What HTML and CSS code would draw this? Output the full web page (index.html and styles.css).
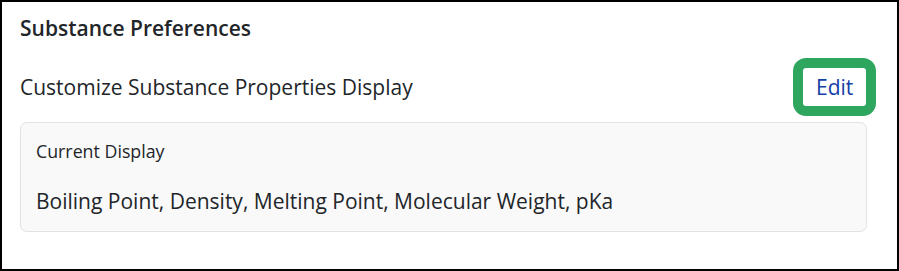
FILE: index.html
```html
<!DOCTYPE html>
<html lang="en">
<head>
<meta charset="utf-8">
<title>Substance Preferences</title>
<link rel="stylesheet" href="styles.css">
</head>
<body>
<section class="panel">
  <h2 class="panel-title">Substance Preferences</h2>
  <div class="setting-row">
    <span class="setting-label">Customize Substance Properties Display</span>
    <button class="edit-btn" type="button">Edit</button>
  </div>
  <div class="current-box">
    <div class="current-label">Current Display</div>
    <div class="current-value">Boiling Point, Density, Melting Point, Molecular Weight, pKa</div>
  </div>
</section>
</body>
</html>
```

FILE: styles.css
```css
html, body {
  margin: 0;
  padding: 0;
  background: #ffffff;
}

body {
  font-family: "Open Sans", "Noto Sans", "DejaVu Sans", sans-serif;
  color: #222529;
}

.panel {
  box-sizing: border-box;
  width: 899px;
  height: 271px;
  border: 2px solid #000000;
  padding: 12px 30px 0 18px;
  display: flex;
  flex-direction: column;
}

.panel-title {
  margin: 0;
  font-size: 21px;
  line-height: 28px;
  font-weight: 600;
  color: #222529;
}

.setting-row {
  margin-top: 26px;
  display: flex;
  align-items: center;
  justify-content: space-between;
}

.setting-label {
  font-size: 21px;
  line-height: 28px;
}

.edit-btn {
  box-sizing: border-box;
  font-family: inherit;
  font-size: 21px;
  line-height: 28px;
  color: #1440a8;
  background: #ffffff;
  border: none;
  border-radius: 3px;
  padding: 5px 0 5px 13px;
  text-align: left;
  height: 38px;
  width: 63px;
  margin-right: 1px;
  outline: 10px solid #2ea65e;
  cursor: pointer;
}

.current-box {
  margin-top: 16px;
  background: #f9f9f9;
  border: 1px solid #e2e2e2;
  border-radius: 7px;
  padding: 16px 15px 16px 15px;
}

.current-label {
  font-size: 17.8px;
  line-height: 24px;
}

.current-value {
  margin-top: 24px;
  font-size: 21px;
  line-height: 28px;
}
```
